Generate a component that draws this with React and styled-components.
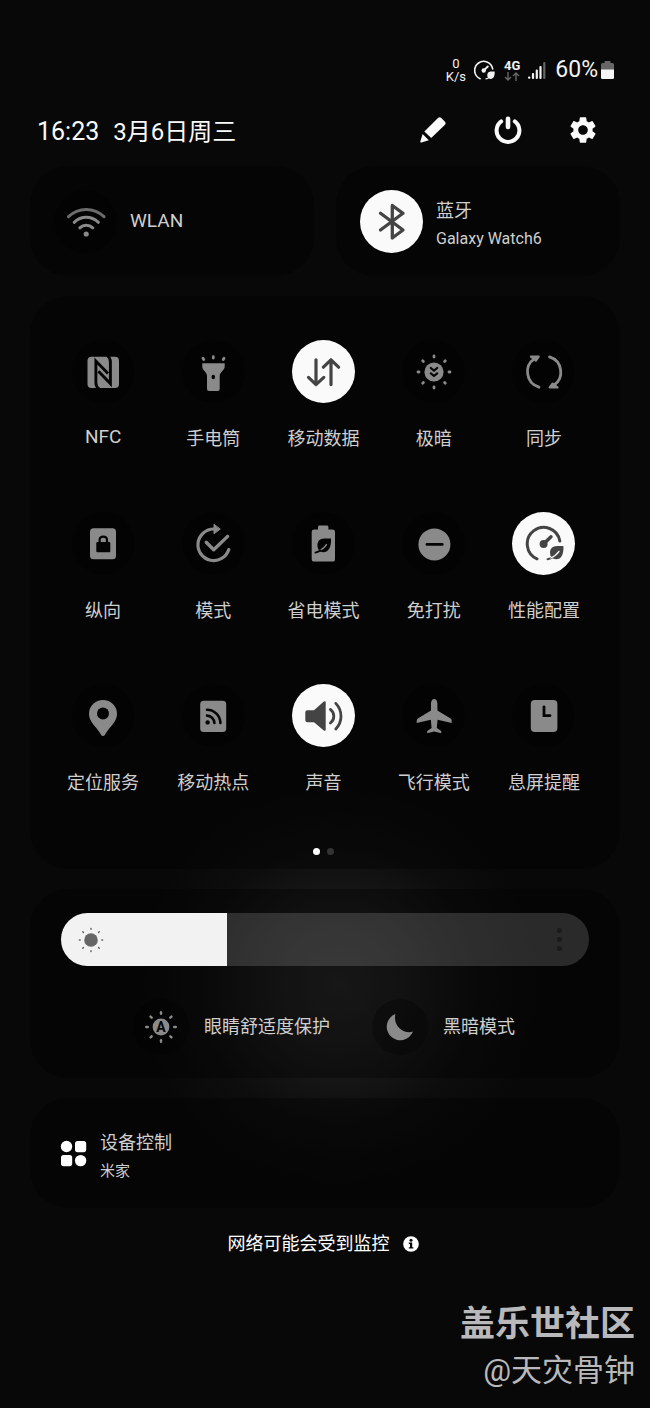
import { useState } from "react"
import styled, { createGlobalStyle } from "styled-components"
import { MdSettings } from "react-icons/md"

const GlobalStyle = createGlobalStyle`
    *{
        box-sizing: border-box;
    }
    body{
        margin: 0;
        background-color: #080808;
        font-family: Roboto, "Noto Sans CJK SC", sans-serif;
        color: #cfcfcf;
    }
    button{
        border: none;
        padding: 0;
        margin: 0;
        background: none;
        color: inherit;
        font: inherit;
        cursor: pointer;
    }
    svg{
        display: block;
        flex-shrink: 0;
    }
`

const Page = styled.main`
    min-height: 100vh;
    display: flex;
    flex-direction: column;
    padding: 56px 30px 16px;
    background: radial-gradient(circle 200px at 52% 985px, #222222 0, #1a1a1a 35%, #0d0d0d 70%, #080808 100%) #080808;
`

const StatusBar = styled.div`
    display: flex;
    flex-direction: row;
    justify-content: flex-end;
    align-items: center;
    height: 28px;
    padding-right: 6px;
    color: #f2f2f2;
`

const StatusStack = styled.div`
    display: flex;
    flex-direction: column;
    align-items: center;
    margin-right: 8px;
    font-size: 13px;
    line-height: ${props => props.$bold ? "12px" : "13px"};
    font-weight: ${props => props.$bold ? "700" : "400"};
`

const StatusIcon = styled.div`
    margin-right: 9px;
`

const BatteryText = styled.span`
    font-size: 23px;
    line-height: 28px;
    margin-right: 3px;
`

const Header = styled.header`
    display: flex;
    flex-direction: row;
    justify-content: space-between;
    align-items: center;
    height: 32px;
    margin: 30px 21px 20px 7px;
    color: #fafafa;
`

const Clock = styled.div`
    display: flex;
    align-items: baseline;
    gap: 14px;
    padding-top: 4px;
    font-size: 25px;
    line-height: 32px;
`

const DateText = styled.span`
    font-size: 24px;
`

const HeaderActions = styled.div`
    display: flex;
    gap: 43px;
`

const HeaderButton = styled.button`
    width: 32px;
    height: 32px;
    display: flex;
    justify-content: center;
    align-items: center;
    font-size: 32px;
`

const Panels = styled.div`
    display: flex;
    flex-direction: column;
    gap: 20px;
`

const Panel = styled.section`
    border-radius: 38px;
    background-color: rgba(0, 0, 0, 0.32);
`

const Connections = styled.div`
    display: grid;
    grid-template-columns: 1fr 1fr;
    gap: 22px;
`

const ConnectionButton = styled.button`
    display: flex;
    flex-direction: row;
    align-items: center;
    gap: 13px;
    height: 110px;
    padding: 0 24px;
    border-radius: 38px;
    background-color: rgba(0, 0, 0, 0.32);
    text-align: left;
`

const TextGroup = styled.span`
    display: flex;
    flex-direction: column;
    gap: 3px;
    padding-top: 7px;
`

const Title = styled.span`
    font-size: ${props => props.$latin ? "19px" : "18px"};
    line-height: ${props => props.$latin ? "22px" : "26px"};
    white-space: nowrap;
`

const SubTitle = styled.span`
    font-size: ${props => props.$latin ? "16px" : "15px"};
    line-height: 24px;
    white-space: nowrap;
`

const IconCircle = styled.span`
    width: ${props => props.$small ? "56px" : "63px"};
    height: ${props => props.$small ? "56px" : "63px"};
    flex-shrink: 0;
    border-radius: 50%;
    display: flex;
    justify-content: center;
    align-items: center;
    background-color: ${props => props.$on ? "#fafafa" : "rgba(0, 0, 0, 0.28)"};
    color: ${props => props.$on ? "#444444" : "#8a8a8a"};
    --cut: ${props => props.$on ? "#fafafa" : "#040404"};
`

const TilePanel = styled(Panel)`
    display: flex;
    flex-direction: column;
    align-items: center;
    padding: 44px 21px 14px 18px;
`

const TileGrid = styled.div`
    width: 100%;
    display: grid;
    grid-template-columns: repeat(5, 1fr);
    row-gap: 60px;
`

const Tile = styled.button`
    display: flex;
    flex-direction: column;
    align-items: center;
    gap: 23px;
`

const Dots = styled.div`
    display: flex;
    gap: 7px;
    margin-top: 52px;
`

const Dot = styled.span`
    width: 7px;
    height: 7px;
    border-radius: 50%;
    background-color: ${props => props.$current ? "#ffffff" : "#333333"};
`

const BrightnessPanel = styled(Panel)`
    padding: 24px 31px 23px;
`

const SliderBox = styled.div`
    position: relative;
    height: 53px;
`

const Slider = styled.input`
    appearance: none;
    display: block;
    width: 100%;
    height: 100%;
    margin: 0;
    border-radius: 27px;
    outline: none;
    cursor: pointer;
    &::-webkit-slider-thumb{
        appearance: none;
        width: 1px;
        height: 53px;
        background: transparent;
    }
`

const SliderSun = styled.span`
    position: absolute;
    left: 17px;
    top: 14px;
    color: #666666;
    pointer-events: none;
`

const MoreButton = styled.button`
    position: absolute;
    right: 20px;
    top: 10px;
    width: 20px;
    height: 33px;
    display: flex;
    flex-direction: column;
    justify-content: center;
    align-items: center;
    gap: 4px;
`

const MoreDot = styled.span`
    width: 5px;
    height: 5px;
    border-radius: 50%;
    background-color: #1b1b1b;
`

const ModeRow = styled.div`
    display: flex;
    justify-content: center;
    gap: 42px;
    margin-top: 33px;
    padding-right: 2px;
`

const ModeButton = styled.button`
    display: flex;
    align-items: center;
    gap: 15px;
`

const DeviceButton = styled(ConnectionButton)`
    width: 100%;
    padding: 0 30px;
`

const Notice = styled.div`
    display: flex;
    justify-content: center;
    align-items: center;
    gap: 13px;
    margin-top: 24px;
    padding-right: 4px;
    color: #ffffff;
    font-size: 18px;
    line-height: 24px;
`

const Watermark = styled.footer`
    display: flex;
    flex-direction: column;
    align-items: flex-end;
    margin: 45px -15px 0 0;
    color: #b9b9bb;
`

const Community = styled.strong`
    font-size: 35px;
    font-weight: 700;
    line-height: 48px;
`

const Author = styled.span`
    font-size: 31px;
    line-height: 44px;
`

// every tile glyph is drawn on the same 40px canvas
function Glyph({ size = 40, box = "0 0 40 40", width = 3, children }) {
    return <svg width={size} height={size} viewBox={box} fill="none" stroke="currentColor"
        strokeWidth={width} strokeLinecap="round" strokeLinejoin="round" aria-hidden="true">
        {children}
    </svg>
}

const solid = { fill: "currentColor", stroke: "none" }
const cut = { fill: "var(--cut)", stroke: "none" }
const cutLine = { stroke: "var(--cut)" }

function Rays({ from, to, width }) {
    return [0, 45, 90, 135, 180, 225, 270, 315].map(angle =>
        <path key={angle} d={`M20 ${20 - from}V${20 - to}`} strokeWidth={width} transform={`rotate(${angle} 20 20)`} />
    )
}

const WifiIcon = () => <Glyph>
    <path d="M2.5 15.6Q10 8.4 20.2 8.4T38 15.6" stroke="#6c6c6c" />
    <path d="M8.2 21.3Q13.5 16.3 20.2 16.3T32.4 21.3" />
    <path d="M13.8 26.8Q16.5 24.2 20.2 24.2T26.8 26.8" />
    <circle cx="20.2" cy="33" r="2.6" {...solid} />
</Glyph>

const BluetoothIcon = () => <Glyph width={3.3}>
    <path d="M8.5 12.3L31 29L20.3 37V4.5L31 12.3L8.5 29" />
</Glyph>

const NfcIcon = () => <Glyph>
    <rect x="4.5" y="4.7" width="31.5" height="31.3" rx="4" {...solid} />
    <path d="M16.5 37.5Q12.9 35 12.9 31V9L25 21.5" {...cutLine} strokeWidth="2.9" strokeLinecap="butt" strokeLinejoin="miter" />
    <path d="M24 3Q27.4 6 27.4 10V31.6L15.4 19.3" {...cutLine} strokeWidth="2.9" strokeLinecap="butt" strokeLinejoin="miter" />
</Glyph>

const FlashlightIcon = () => <Glyph>
    <path d="M9.3 11.3H31.7V14.5C31.7 18.5 26.7 20 26.7 24V37Q26.7 39 24.7 39H16Q14 39 14 37V24C14 20 9.3 18.5 9.3 14.5Z" {...solid} />
    <ellipse cx="20.3" cy="25" rx="1.8" ry="2.3" {...cut} />
    <path d="M10 6.2L10.8 7.6M20.3 4.6V6M31 6.2L30.2 7.6" strokeWidth="2.8" />
</Glyph>

const DataIcon = () => <Glyph>
    <path d="M13 7.8V32.4M5.5 25.4L13 32.6L20.8 25.4M28 32.6V8M20.4 15.2L28 7.8L35.6 15.2" strokeWidth="3.2" />
</Glyph>

const ExtraDimIcon = () => <Glyph>
    <circle cx="20" cy="20" r="9.6" {...solid} />
    <path d="M16.8 16L20 18.6L23.2 16M16.8 21.4L20 24L23.2 21.4" {...cutLine} strokeWidth="2.2" />
    <Rays from={15} to={16} width={2.8} />
</Glyph>

const SyncIcon = () => <Glyph>
    <path d="M15 35.2A16 16 0 0 1 10.5 6.6M25.5 4.9A16 16 0 0 1 29.8 33.4" strokeWidth="2.8" />
    <path d="M7 4.6H14.6L12 8.4ZM25.8 35.4H33.4L28.6 31.8Z" fill="currentColor" strokeWidth="2.4" />
</Glyph>

const PortraitIcon = () => <Glyph>
    <rect x="7" y="4.3" width="26" height="31" rx="3.5" {...solid} />
    <rect x="13.3" y="18" width="14" height="10.3" rx="1" {...cut} />
    <path d="M16.6 18.5V16Q16.6 12.6 20.3 12.6T24 16V18.5" {...cutLine} strokeWidth="2.2" />
</Glyph>

const ModeIcon = () => <Glyph>
    <path d="M21 5A15.8 15.8 0 1 0 35.8 25.6" strokeWidth="3.2" />
    <path d="M21 0.6V9.8L27 5.3Z" {...solid} stroke="currentColor" strokeWidth="1" />
    <path d="M13.2 18.2L20.7 25.8L34.6 12.4" strokeWidth="3.4" />
</Glyph>

const BatteryLeafIcon = () => <Glyph>
    <path d="M15 3Q15 1.6 16.4 1.6H24Q25.4 1.6 25.4 3V5.6H29.5Q32 5.6 32 8V35Q32 37.6 29.5 37.6H11.2Q8.7 37.6 8.7 35V8Q8.7 5.6 11.2 5.6H15Z" {...solid} />
    <path d="M28 14.6H21.5C15.5 14.6 13.2 19.5 15 24.6L16.8 27.5C24 30.5 28.6 25 28 14.6Z" {...cut} />
    <path d="M23.4 20.6Q21 25 12.6 28.6" stroke="currentColor" strokeWidth="1.4" />
    <path d="M12.4 28.6Q15.5 27.8 17.6 26.2" {...cutLine} strokeWidth="1.8" />
</Glyph>

const DndIcon = () => <Glyph>
    <circle cx="20.4" cy="20.4" r="16" {...solid} />
    <path d="M13 20.4H28.2" {...cutLine} strokeWidth="2.8" />
</Glyph>

const PerformanceIcon = ({ size, box }) => <Glyph size={size} box={box}>
    <path d="M13 34.8A16.4 16.4 0 1 1 35.8 17" />
    <circle cx="19.6" cy="20" r="4" {...solid} />
    <path d="M19.8 19.8L27 12.8" strokeWidth="3.4" />
    <path d="M39.4 22H33.2C27.4 22 25 26 26.4 31.2L28.8 34.6C36 37.4 40 32 39.4 22Z" {...solid} />
    <path d="M23.6 35.2Q26.8 34.8 28.8 33" strokeWidth="2" />
    <path d="M35 27.4Q32.4 31.4 26.8 34" {...cutLine} strokeWidth="1.3" />
</Glyph>

const LocationIcon = () => <Glyph>
    <path d="M20 40C18.6 40 18 38.8 17 37C13 30.5 6 25.6 6 18A14 14 0 0 1 34 18C34 25.6 27 30.5 23 37C22 38.8 21.4 40 20 40Z" {...solid} />
    <circle cx="20" cy="17.4" r="6" {...cut} />
</Glyph>

const HotspotIcon = () => <Glyph>
    <rect x="7.2" y="4.7" width="26" height="31.3" rx="3.5" {...solid} />
    <circle cx="14.6" cy="26.4" r="2.2" {...cut} />
    <path d="M14 19.6A7.6 7.6 0 0 1 21.4 27M14 13.8A13.4 13.4 0 0 1 27.4 27" {...cutLine} strokeWidth="2.6" />
</Glyph>

const SoundIcon = () => <Glyph>
    <path d="M4.3 14.3H11L20.8 5.6Q22.7 4.4 22.7 6.4V33.6Q22.7 35.6 20.8 34.4L11 26.3H4.3Q2.3 26.3 2.3 24.3V16.3Q2.3 14.3 4.3 14.3Z" {...solid} />
    <path d="M27.4 13.4Q30.8 16 30.8 20.2T27.4 27M32.8 7.4Q38 13 38 20.2T32.8 33" strokeWidth="2.8" />
</Glyph>

const AirplaneIcon = () => <Glyph>
    <path d="M20.2 3C22 3 23.4 5 23.4 7.4V14.4L36.6 22.6Q37.7 23.4 37.7 25V27L23.6 23.8L22.8 32L27.2 35V37.3L20.2 35.6L13.2 37.3V35L17.6 32L16.8 23.8L2.7 27V25Q2.7 23.4 3.8 22.6L17 14.4V7.4C17 5 18.4 3 20.2 3Z" {...solid} />
</Glyph>

const AodIcon = () => <Glyph>
    <rect x="6.8" y="4" width="26.6" height="32" rx="4" {...solid} />
    <path d="M20 10.8V19.6H26" {...cutLine} strokeWidth="2.8" strokeLinejoin="miter" />
</Glyph>

const EyeComfortIcon = () => <Glyph>
    <circle cx="20" cy="20" r="8.4" {...solid} />
    <text x="20" y="25" textAnchor="middle" fontSize="14" fontWeight="700" {...cut}>A</text>
    <Rays from={13.2} to={14.8} width={2.4} />
</Glyph>

const MoonIcon = () => <Glyph>
    <path d="M15.4 7A13.6 13.6 0 1 0 33 24.6C24.5 27.6 12.6 19.6 15.4 7Z" {...solid} />
</Glyph>

const SunIcon = () => <Glyph size={26} box="7 7 26 26">
    <circle cx="20" cy="20" r="6.8" {...solid} />
    <Rays from={10.8} to={11.6} width={1.5} />
</Glyph>

const PencilIcon = () => <svg width="28" height="28" viewBox="0 0 28 28" fill="currentColor" aria-hidden="true">
    <path d="M19 2Q20.6 0.4 22.2 2L26 5.8Q27.4 7.4 26 8.8L12.2 22L5.4 15.4Z" />
    <path d="M3.6 18L9.8 24.3L2.4 26.5Q1 26.8 1.3 25.4Z" />
</svg>

const PowerIcon = () => <svg width="28" height="28" viewBox="0 0 28 28" fill="none" stroke="currentColor" strokeLinecap="round" aria-hidden="true">
    <path d="M7.2 5.4A11.4 11.4 0 1 0 20.8 5.4" strokeWidth="4" />
    <path d="M14 2.8V11" strokeWidth="4.6" />
</svg>

const ArrowsIcon = () => <svg width="16" height="9" viewBox="0 0 16 9" fill="none" stroke="#666666" strokeWidth="1.4" aria-hidden="true">
    <path d="M4 0V8M1 5L4 8L7 5M12 9V1M9 4L12 1L15 4" />
</svg>

const SignalIcon = () => <svg width="18" height="18" viewBox="0 0 18 18" fill="currentColor" aria-hidden="true">
    <rect x="0" y="15.4" width="2.4" height="2.4" rx="1" />
    <rect x="3.9" y="12" width="2.2" height="6" rx="1" />
    <rect x="7.7" y="8.6" width="2.2" height="9.4" rx="1" />
    <rect x="11.4" y="5" width="2.2" height="13" rx="1" />
    <rect x="15.2" y="1" width="2.2" height="17" rx="1" fill="#666666" />
</svg>

const BatteryIcon = () => <svg width="13" height="18" viewBox="0 0 13 18" aria-hidden="true">
    <path d="M3.6 0H9.4V2H11.5Q13 2 13 3.5V9H0V3.5Q0 2 1.5 2H3.6Z" fill="#666666" />
    <path d="M0 8.6H13V16.5Q13 18 11.5 18H1.5Q0 18 0 16.5Z" fill="#f4f4f4" />
</svg>

const DevicesIcon = () => <svg width="27" height="27" viewBox="0 0 27 27" fill="#ffffff" aria-hidden="true">
    <circle cx="6.5" cy="6.5" r="5.7" />
    <rect x="15" y="1" width="11.2" height="11.2" rx="2.6" />
    <rect x="1" y="15" width="11.2" height="11.2" rx="2.6" />
    <circle cx="20.6" cy="20.6" r="5.7" />
</svg>

const InfoIcon = () => <svg width="16" height="16" viewBox="0 0 16 16" aria-hidden="true">
    <circle cx="8" cy="8" r="7.8" fill="#ffffff" />
    <circle cx="8" cy="4.2" r="1.5" fill="#080808" />
    <path d="M5.8 6.6H9.2V11.2H10.4V12.6H5.8V11.2H7V8H5.8Z" fill="#080808" />
</svg>

const TILES = [
    { label: "NFC", icon: NfcIcon, latin: true },
    { label: "手电筒", icon: FlashlightIcon },
    { label: "移动数据", icon: DataIcon, on: true },
    { label: "极暗", icon: ExtraDimIcon },
    { label: "同步", icon: SyncIcon },
    { label: "纵向", icon: PortraitIcon },
    { label: "模式", icon: ModeIcon },
    { label: "省电模式", icon: BatteryLeafIcon },
    { label: "免打扰", icon: DndIcon },
    { label: "性能配置", icon: PerformanceIcon, on: true },
    { label: "定位服务", icon: LocationIcon },
    { label: "移动热点", icon: HotspotIcon },
    { label: "声音", icon: SoundIcon, on: true },
    { label: "飞行模式", icon: AirplaneIcon },
    { label: "息屏提醒", icon: AodIcon },
]

function QuickTile({ label, icon: Icon, on, latin }) {
    const [active, setActive] = useState(Boolean(on))
    return <Tile type="button" aria-pressed={active} onClick={() => setActive(!active)}>
        <IconCircle $on={active}><Icon /></IconCircle>
        <Title $latin={latin}>{label}</Title>
    </Tile>
}

function Brightness() {
    const [value, setValue] = useState(31.4)
    const fill = `linear-gradient(to right, #f2f2f2 ${value}%, rgba(255, 255, 255, 0.15) ${value}%)`
    return <SliderBox>
        <Slider type="range" min="0" max="100" step="0.1" aria-label="亮度" value={value}
            onChange={e => setValue(Number(e.target.value))} style={{ background: fill }} />
        <SliderSun><SunIcon /></SliderSun>
        <MoreButton type="button" aria-label="更多">
            <MoreDot />
            <MoreDot />
            <MoreDot />
        </MoreButton>
    </SliderBox>
}

export default function App() {
    return <>
        <GlobalStyle />
        <Page lang="zh-CN">
            <StatusBar>
                <StatusStack>
                    <span>0</span>
                    <span>K/s</span>
                </StatusStack>
                <StatusIcon><PerformanceIcon size={21} box="2 1 38 38" /></StatusIcon>
                <StatusStack $bold>
                    <span>4G</span>
                    <ArrowsIcon />
                </StatusStack>
                <StatusIcon><SignalIcon /></StatusIcon>
                <BatteryText>60%</BatteryText>
                <BatteryIcon />
            </StatusBar>
            <Header>
                <Clock>
                    <span>16:23</span>
                    <DateText>3月6日周三</DateText>
                </Clock>
                <HeaderActions>
                    <HeaderButton type="button" aria-label="编辑"><PencilIcon /></HeaderButton>
                    <HeaderButton type="button" aria-label="电源"><PowerIcon /></HeaderButton>
                    <HeaderButton type="button" aria-label="设置"><MdSettings /></HeaderButton>
                </HeaderActions>
            </Header>
            <Panels>
                <Connections>
                    <ConnectionButton type="button" aria-pressed="false">
                        <IconCircle><WifiIcon /></IconCircle>
                        <Title $latin>WLAN</Title>
                    </ConnectionButton>
                    <ConnectionButton type="button" aria-pressed="true">
                        <IconCircle $on><BluetoothIcon /></IconCircle>
                        <TextGroup>
                            <Title>蓝牙</Title>
                            <SubTitle $latin>Galaxy Watch6</SubTitle>
                        </TextGroup>
                    </ConnectionButton>
                </Connections>
                <TilePanel>
                    <TileGrid>
                        {TILES.map(tile => <QuickTile key={tile.label} {...tile} />)}
                    </TileGrid>
                    <Dots>
                        <Dot $current />
                        <Dot />
                    </Dots>
                </TilePanel>
                <BrightnessPanel>
                    <Brightness />
                    <ModeRow>
                        <ModeButton type="button" aria-pressed="false">
                            <IconCircle $small><EyeComfortIcon /></IconCircle>
                            <Title>眼睛舒适度保护</Title>
                        </ModeButton>
                        <ModeButton type="button" aria-pressed="false">
                            <IconCircle $small><MoonIcon /></IconCircle>
                            <Title>黑暗模式</Title>
                        </ModeButton>
                    </ModeRow>
                </BrightnessPanel>
                <DeviceButton type="button">
                    <DevicesIcon />
                    <TextGroup>
                        <Title>设备控制</Title>
                        <SubTitle>米家</SubTitle>
                    </TextGroup>
                </DeviceButton>
            </Panels>
            <Notice>
                <span>网络可能会受到监控</span>
                <InfoIcon />
            </Notice>
            <Watermark>
                <Community>盖乐世社区</Community>
                <Author>@天灾骨钟</Author>
            </Watermark>
        </Page>
    </>
}
